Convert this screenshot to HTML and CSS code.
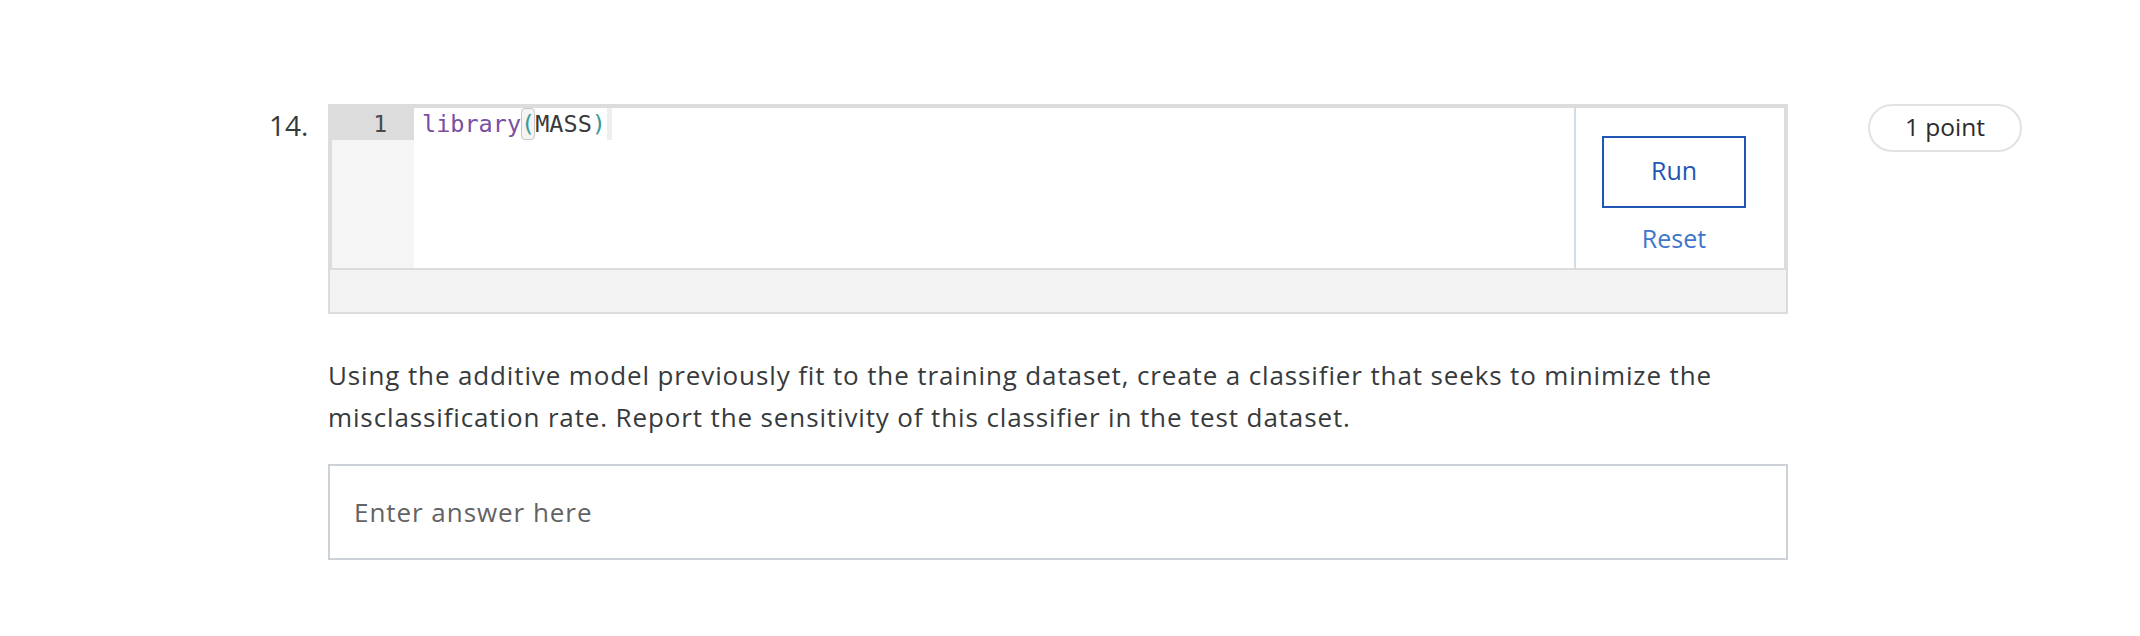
FILE: index.html
```html
<!DOCTYPE html>
<html>
<head>
<meta charset="utf-8">
<link rel="stylesheet" href="styles.css">
</head>
<body>
<div class="question">
  <div class="qnum">14.</div>
  <div class="qmain">
    <div class="code-widget">
      <div class="editor-row">
        <div class="gutter"><div class="lineno active">1</div></div>
        <div class="code">
          <div class="code-line"><span class="kw">library</span><span class="paren match">(</span><span class="name">MASS</span><span class="paren">)</span><span class="eol"></span></div>
        </div>
        <div class="actions">
          <button class="run">Run</button>
          <span class="reset">Reset</span>
        </div>
      </div>
      <div class="output-bar"></div>
    </div>
    <p class="prompt">Using the additive model previously fit to the training dataset, create a classifier that seeks to minimize the misclassification rate. Report the sensitivity of this classifier in the test dataset.</p>
    <div class="answer"><span class="placeholder">Enter answer here</span></div>
  </div>
  <div class="points">1 point</div>
</div>
</body>
</html>
```
FILE: styles.css
```css
* { box-sizing: border-box; }
body {
  margin: 0;
  background: #fff;
  font-family: "Open Sans", "Liberation Sans", sans-serif;
  color: #373a3c;
}
.question {
  display: flex;
  align-items: flex-start;
  padding: 104px 0 0 269px;
}
.qnum {
  width: 59px;
  font-size: 28px;
  line-height: 42px;
  color: #373a3c;
}
.qmain {
  width: 1460px;
}
.code-widget {
  border: 2px solid #dcdcdc;
}
.editor-row {
  display: flex;
  height: 164px;
  border: 2px solid #dcdcdc;
}
.gutter {
  width: 82px;
  background: #f5f5f5;
}
.lineno {
  height: 32px;
  line-height: 32px;
  text-align: right;
  padding-right: 27px;
  font-family: "DejaVu Sans Mono", monospace;
  font-size: 23px;
  color: #4a4a4a;
}
.lineno.active { background: #dcdcdc; }
.code {
  flex: 1;
  padding-left: 8px;
  background: #fff;
}
.code-line {
  display: flex;
  height: 32px;
  line-height: 32px;
  font-family: "DejaVu Sans Mono", monospace;
  font-size: 23.5px;
  white-space: pre;
}
.kw { color: #7a4ea3; }
.paren { color: #3a9a9a; }
.name { color: #3a3a3a; }
.match {
  outline: 1px solid #c8c8c8;
  outline-offset: -1px;
  border-radius: 4px;
  background: #f4f4f4;
}
.eol {
  width: 5px;
  margin-left: 1px;
  background: #eeeeee;
}
.actions {
  width: 210px;
  border-left: 2px solid #d3dde6;
  display: flex;
  flex-direction: column;
  align-items: center;
  padding: 28px 12px 0 0;
}
.run {
  width: 144px;
  height: 72px;
  border: 2px solid #1f56b4;
  background: #fff;
  color: #2156b6;
  font-family: "Open Sans", "Liberation Sans", sans-serif;
  font-size: 25px;
  padding: 0 0 5px;
}
.reset {
  margin-top: 13px;
  font-size: 25px;
  line-height: 34px;
  color: #3f76cc;
}
.output-bar {
  height: 42px;
  background: #f3f3f3;
}
.prompt {
  margin: 40px 0 26px;
  font-size: 26px;
  letter-spacing: 0.87px;
  line-height: 42px;
  color: #373a3c;
}
.answer {
  height: 96px;
  border: 2px solid #cdd2d8;
  display: flex;
  align-items: center;
  padding-left: 24px;
}
.placeholder {
  font-size: 26px;
  letter-spacing: 0.95px;
  color: #636363;
}
.points {
  margin-left: 80px;
  width: 154px;
  height: 48px;
  border: 2px solid #e2e2e2;
  border-radius: 24px;
  text-align: center;
  font-size: 24.5px;
  line-height: 42px;
  color: #2b2b2b;
}
```
